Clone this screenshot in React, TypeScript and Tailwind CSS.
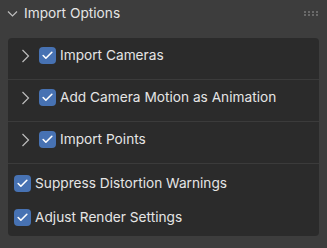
import { Check } from "lucide-react";

const font = { fontFamily: "Inter, 'Noto Sans', sans-serif" };

const Checkbox = () => (
  <span className="flex h-[17px] w-[17px] shrink-0 items-center justify-center rounded-[4px] bg-[#4772b3]">
    <Check size={13} strokeWidth={3} color="#ffffff" />
  </span>
);

const ChevronDown = () => (
  <svg width="11" height="10" viewBox="0 0 11 10" className="shrink-0">
    <path d="M1 2.5 L5.5 7 L10 2.5" fill="none" stroke="#bdbdbd" strokeWidth="1.2" />
  </svg>
);

const ChevronRight = () => (
  <svg width="9" height="14" viewBox="0 0 9 14" className="shrink-0">
    <path d="M1.5 1 L7.5 7 L1.5 13" fill="none" stroke="#bdbdbd" strokeWidth="1.2" />
  </svg>
);

const Grip = () => (
  <div className="grid grid-cols-4 gap-x-[2px] gap-y-[1px]">
    {Array.from({ length: 8 }).map((_, i) => (
      <span key={i} className="h-[2px] w-[2px] bg-[#6a6a6a]" />
    ))}
  </div>
);

const subPanels = ["Import Cameras", "Add Camera Motion as Animation", "Import Points"];
const options = ["Suppress Distortion Warnings", "Adjust Render Settings"];

export default function App() {
  return (
    <div className="h-[248px] w-[327px] bg-[#3d3d3d] text-[13.7px] text-[#e5e5e5]" style={font}>
      <div className="flex h-[26px] items-center pl-[7px] pr-[9px] pt-[1px]">
        <ChevronDown />
        <span className="ml-[6px] flex-1">Import Options</span>
        <Grip />
      </div>
      <div className="ml-[8px] mr-[8px] mt-[12px] rounded-[4px] bg-[#2b2b2b]">
        {subPanels.map((label) => (
          <div key={label} className="flex h-[42px] items-start border-b border-[#3b3b3b] pl-[13px] pt-[9px]">
            <span className="flex h-[17px] items-center">
              <ChevronRight />
            </span>
            <span className="ml-[9px]">
              <Checkbox />
            </span>
            <span className="ml-[4px] leading-[17px]">{label}</span>
          </div>
        ))}
        <div className="flex flex-col gap-[17px] pb-[10px] pt-[11px]">
          {options.map((label) => (
            <div key={label} className="flex h-[17px] items-center pl-[6px]">
              <Checkbox />
              <span className="ml-[4px]">{label}</span>
            </div>
          ))}
        </div>
      </div>
    </div>
  );
}
